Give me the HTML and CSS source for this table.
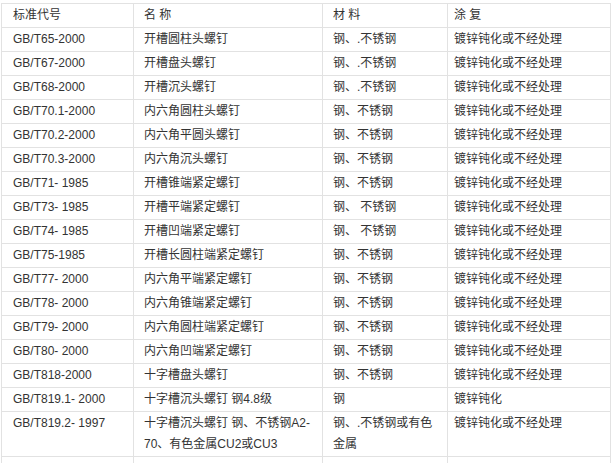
FILE: index.html
```html
<!DOCTYPE html>
<html>
<head>
<meta charset="utf-8">
<link rel="stylesheet" href="styles.css">
</head>
<body>
<table class="spec">
<colgroup><col class="c1"><col class="c2"><col class="c3"><col class="c4"></colgroup>
<tr><td>标准代号</td><td>名 称</td><td>材 料</td><td>涂 复</td></tr>
<tr><td>GB/T65-2000</td><td>开槽圆柱头螺钉</td><td>钢、.不锈钢</td><td>镀锌钝化或不经处理</td></tr>
<tr><td>GB/T67-2000</td><td>开槽盘头螺钉</td><td>钢、.不锈钢</td><td>镀锌钝化或不经处理</td></tr>
<tr><td>GB/T68-2000</td><td>开槽沉头螺钉</td><td>钢、.不锈钢</td><td>镀锌钝化或不经处理</td></tr>
<tr><td>GB/T70.1-2000</td><td>内六角圆柱头螺钉</td><td>钢、不锈钢</td><td>镀锌钝化或不经处理</td></tr>
<tr><td>GB/T70.2-2000</td><td>内六角平圆头螺钉</td><td>钢、不锈钢</td><td>镀锌钝化或不经处理</td></tr>
<tr><td>GB/T70.3-2000</td><td>内六角沉头螺钉</td><td>钢、不锈钢</td><td>镀锌钝化或不经处理</td></tr>
<tr><td>GB/T71- 1985</td><td>开槽锥端紧定螺钉</td><td>钢、不锈钢</td><td>镀锌钝化或不经处理</td></tr>
<tr><td>GB/T73- 1985</td><td>开槽平端紧定螺钉</td><td>钢、 不锈钢</td><td>镀锌钝化或不经处理</td></tr>
<tr><td>GB/T74- 1985</td><td>开槽凹端紧定螺钉</td><td>钢、 不锈钢</td><td>镀锌钝化或不经处理</td></tr>
<tr><td>GB/T75-1985</td><td>开槽长圆柱端紧定螺钉</td><td>钢、不锈钢</td><td>镀锌钝化或不经处理</td></tr>
<tr><td>GB/T77- 2000</td><td>内六角平端紧定螺钉</td><td>钢、不锈钢</td><td>镀锌钝化或不经处理</td></tr>
<tr><td>GB/T78- 2000</td><td>内六角锥端紧定螺钉</td><td>钢、不锈钢</td><td>镀锌钝化或不经处理</td></tr>
<tr><td>GB/T79- 2000</td><td>内六角圆柱端紧定螺钉</td><td>钢、不锈钢</td><td>镀锌钝化或不经处理</td></tr>
<tr><td>GB/T80- 2000</td><td>内六角凹端紧定螺钉</td><td>钢、不锈钢</td><td>镀锌钝化或不经处理</td></tr>
<tr><td>GB/T818-2000</td><td>十字槽盘头螺钉</td><td>钢、不锈钢</td><td>镀锌钝化或不经处理</td></tr>
<tr><td>GB/T819.1- 2000</td><td>十字槽沉头螺钉 钢4.8级</td><td>钢</td><td>镀锌钝化</td></tr>
<tr class="tall"><td>GB/T819.2- 1997</td><td>十字槽沉头螺钉 钢、不锈钢A2-70、有色金属CU2或CU3</td><td>钢、.不锈钢或有色金属</td><td>镀锌钝化或不经处理</td></tr>
<tr class="more"><td></td><td></td><td></td><td></td></tr>
</table>
</body>
</html>
```
FILE: styles.css
```css
html, body {
  margin: 0;
  background: #fff;
}
body {
  padding: 3px 0 0 1px;
  font-family: "Liberation Sans", "Noto Sans CJK SC", sans-serif;
  font-size: 12px;
  color: #333;
}
.spec {
  border-collapse: collapse;
  table-layout: fixed;
  width: 609px;
}
.c1 { width: 132px; }
.c2 { width: 189px; }
.c3 { width: 125px; }
.c4 { width: 163px; }
.spec td {
  border: 1px solid #e2e2e2;
  padding: 1px 8px 1px 11px;
  line-height: 21px;
  height: 21px;
  vertical-align: middle;
  white-space: normal;
  word-break: break-all;
}
.spec td + td {
  padding-left: 10px;
}
.spec td:last-child {
  padding-left: 6px;
}
.spec .tall td {
  vertical-align: top;
}
.spec .more td {
  height: 21px;
}
```
